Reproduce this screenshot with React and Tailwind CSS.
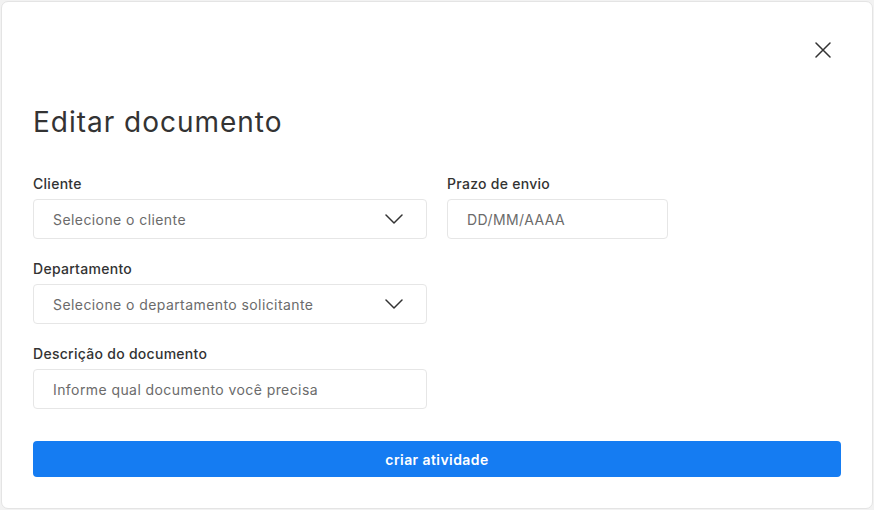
import React from "react";

function Chevron() {
  return (
    <svg width="18" height="10" viewBox="0 0 18 10" fill="none" className="shrink-0">
      <path d="M1 1l8 8 8-8" stroke="#333" strokeWidth="1.5" strokeLinecap="round" strokeLinejoin="round" />
    </svg>
  );
}

function Field({ label, children, className = "" }) {
  return (
    <div className={"flex flex-col gap-[5px] " + className}>
      <label className="text-[14px] leading-5 font-medium tracking-[0.02em] text-[#333333]">{label}</label>
      {children}
    </div>
  );
}

function Box({ text, select, w }) {
  return (
    <div className={"h-10 flex items-center justify-between rounded-[4px] border border-[#e6e6e6] bg-white pl-[19px] pr-[23px] " + w}>
      <span className="text-[14px] tracking-[0.03em] text-[#6b6b6b]">{text}</span>
      {select && <Chevron />}
    </div>
  );
}

export default function App() {
  return (
    <div className="w-[874px] h-[510px] bg-[#f2f2f2] p-px" style={{ fontFamily: "Inter, 'Noto Sans', sans-serif" }}>
      <div className="h-full rounded-[7px] border border-[#e4e4e4] bg-white px-[31px] pt-10">
        <div className="flex justify-end pr-[10px]">
          <svg width="16" height="16" viewBox="0 0 16 16" fill="none">
            <path d="M1 1l14 14M15 1L1 15" stroke="#333" strokeWidth="1.5" strokeLinecap="round" />
          </svg>
        </div>
        <h1 className="mt-[46px] text-[28px] leading-9 font-normal tracking-[0.035em] text-[#333333]">Editar documento</h1>
        <div className="mt-[34px] flex gap-5">
          <div className="flex flex-col gap-5">
            <Field label="Cliente">
              <Box text="Selecione o cliente" select w="w-[394px]" />
            </Field>
            <Field label="Departamento">
              <Box text="Selecione o departamento solicitante" select w="w-[394px]" />
            </Field>
            <Field label="Descrição do documento">
              <Box text="Informe qual documento você precisa" w="w-[394px]" />
            </Field>
          </div>
          <div className="flex flex-col">
            <Field label="Prazo de envio">
              <Box text="DD/MM/AAAA" w="w-[221px]" />
            </Field>
          </div>
        </div>
        <button className="mt-8 h-9 w-[808px] rounded-[4px] bg-[#157cf2] text-[14px] font-semibold tracking-[0.03em] text-white">
          criar atividade
        </button>
      </div>
    </div>
  );
}
